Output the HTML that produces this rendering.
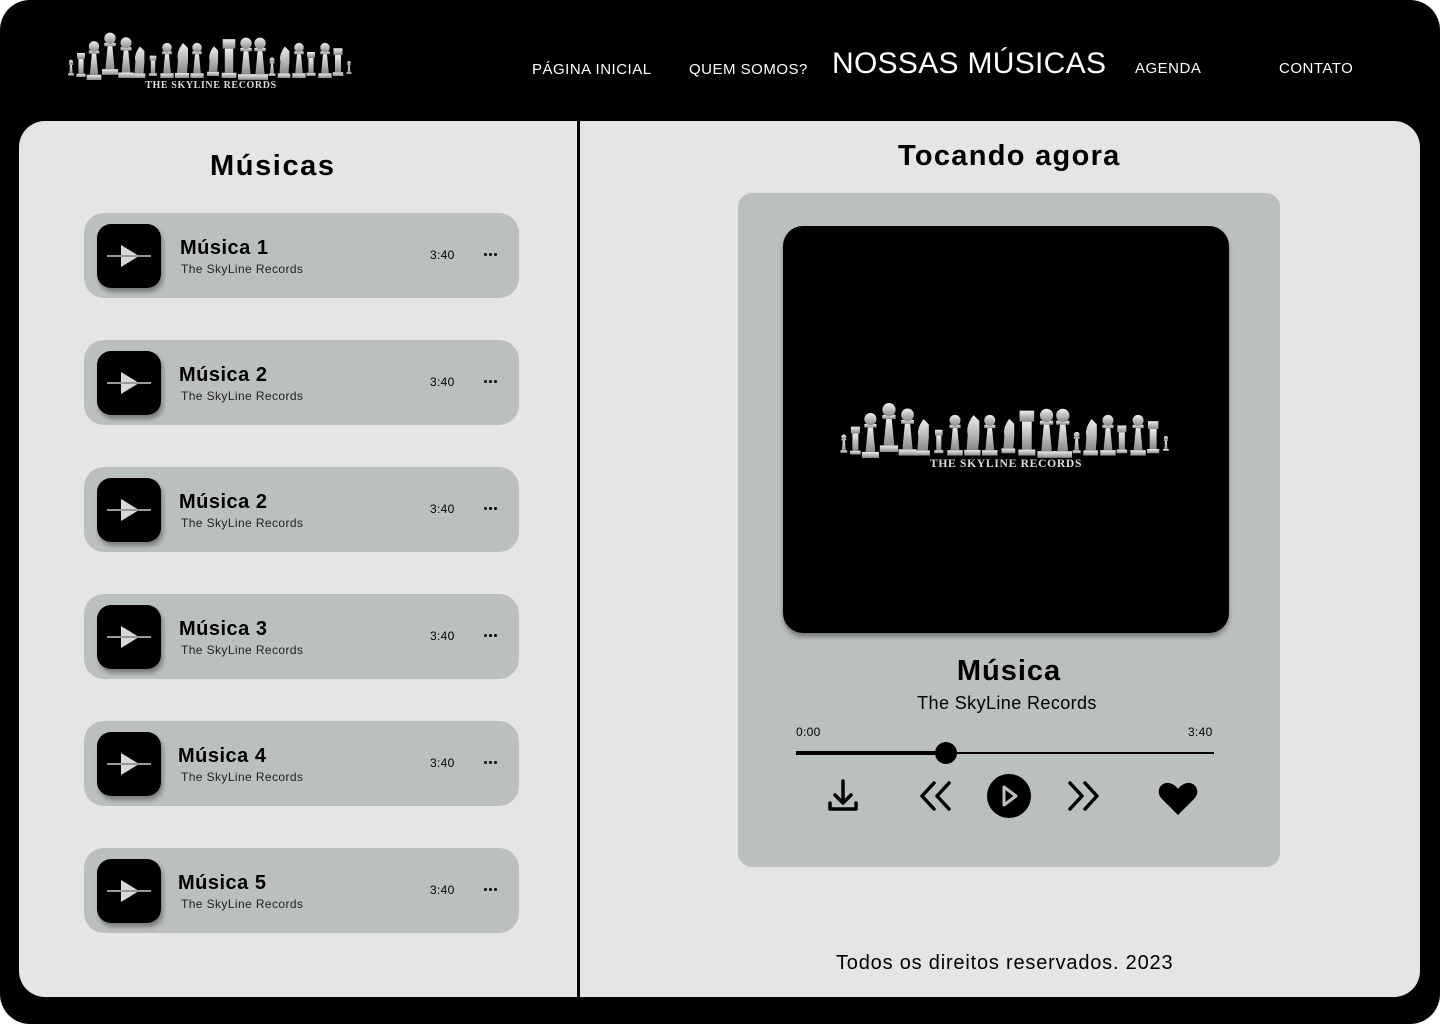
<!DOCTYPE html>
<html><head><meta charset="utf-8"><style>
*{margin:0;padding:0;box-sizing:border-box}
body{width:1440px;height:1024px;background:#fff;font-family:"Liberation Sans",sans-serif;overflow:hidden}
.frame{position:absolute;left:0;top:0;width:1440px;height:1024px;background:#000;border-radius:30px}
.nav{position:absolute;color:#fff;font-size:15px;top:61px;letter-spacing:.5px}
.panel{position:absolute;left:19px;top:121px;width:1401px;height:876px;background:#e5e5e5;border-radius:26px}
.divider{position:absolute;left:577px;top:121px;width:3px;height:876px;background:#000}
.item{position:absolute;left:84px;width:435px;height:85px;background:#bcbfc0;border-radius:20px}
.ic{position:absolute;left:13px;top:11px;width:64px;height:64px;background:#000;border-radius:14px;box-shadow:2px 4px 5px rgba(0,0,0,.35)}
.tt{position:absolute;left:96px;top:24px;font-size:20px;font-weight:bold;letter-spacing:.5px}
.st{position:absolute;left:97px;top:49px;font-size:12px;color:#222;letter-spacing:.4px}
.tm{position:absolute;left:346px;top:35px;font-size:12px;letter-spacing:.3px}
.dots{position:absolute;left:400px;top:40px;display:flex;gap:2px}
.dots i{width:3px;height:3px;background:#000;border-radius:50%}
</style></head><body>
<svg width="0" height="0" style="position:absolute">
<defs>
<linearGradient id="g" x1="0" y1="0" x2="0" y2="1"><stop offset="0" stop-color="#eee"/><stop offset="1" stop-color="#8a8a8a"/></linearGradient>
<symbol id="pc" viewBox="0 0 14 40"><rect x="0" y="35" width="14" height="5" fill="url(#g)"/><polygon points="3,35 5,14 9,14 11,35" fill="url(#g)"/><rect x="2" y="12" width="10" height="3" fill="url(#g)"/><circle cx="7" cy="8" r="5" fill="url(#g)"/></symbol>
<symbol id="kn" viewBox="0 0 14 40"><rect x="0" y="35" width="14" height="5" fill="url(#g)"/><path d="M2 35 L3 22 Q1 14 8 5 L13 10 L13 22 L12 35Z" fill="url(#g)"/></symbol>
<symbol id="rk" viewBox="0 0 14 40"><rect x="0" y="35" width="14" height="5" fill="url(#g)"/><rect x="3" y="12" width="8" height="23" fill="url(#g)"/><rect x="1" y="3" width="12" height="9" fill="url(#g)"/></symbol>
<symbol id="logo" viewBox="0 0 290 70">
<use href="#pc" x="2" y="38" width="6" height="18"/><use href="#rk" x="10" y="31" width="10" height="26"/>
<use href="#pc" x="20" y="18" width="16" height="42"/><use href="#pc" x="36" y="2" width="16" height="60"/>
<use href="#pc" x="52" y="14" width="16" height="44"/><use href="#kn" x="66" y="22" width="14" height="36"/>
<use href="#rk" x="82" y="34" width="10" height="22"/><use href="#pc" x="94" y="20" width="14" height="38"/>
<use href="#kn" x="106" y="18" width="20" height="40"/><use href="#pc" x="124" y="20" width="14" height="38"/>
<use href="#kn" x="140" y="22" width="14" height="34"/><use href="#rk" x="154" y="16" width="18" height="42"/>
<use href="#pc" x="172" y="14" width="16" height="46"/><use href="#pc" x="186" y="14" width="16" height="46"/>
<use href="#pc" x="202" y="36" width="8" height="20"/><use href="#kn" x="210" y="22" width="16" height="36"/>
<use href="#pc" x="226" y="20" width="14" height="38"/><use href="#rk" x="240" y="30" width="10" height="26"/>
<use href="#pc" x="252" y="20" width="14" height="38"/><use href="#rk" x="266" y="26" width="12" height="30"/>
<use href="#pc" x="280" y="40" width="6" height="14"/>
<text x="145" y="68" text-anchor="middle" font-family="Liberation Serif,serif" font-size="10" font-weight="bold" letter-spacing=".6" fill="#ddd">THE SKYLINE RECORDS</text>
</symbol>
</defs></svg>
<div class="frame"></div>
<svg style="position:absolute;left:66px;top:20px" width="290" height="70"><use href="#logo" width="290" height="70"/></svg>
<div class="nav" style="left:532px">PÁGINA INICIAL</div>
<div class="nav" style="left:689px">QUEM SOMOS?</div>
<div class="nav" style="left:832px;top:47px;font-size:30px;letter-spacing:.3px">NOSSAS MÚSICAS</div>
<div class="nav" style="left:1135px;top:60px">AGENDA</div>
<div class="nav" style="left:1279px;top:60px">CONTATO</div>
<div class="panel"></div>
<div class="divider"></div>
<div style="position:absolute;left:210px;top:150px;font-size:29px;font-weight:bold;letter-spacing:1.6px">Músicas</div>
<div style="position:absolute;left:898px;top:140px;font-size:29px;font-weight:bold;letter-spacing:1.3px">Tocando agora</div>

<div class="item" style="top:213px"><div class="ic"><svg width="64" height="64"><polygon points="24,21 24,43 42,32" fill="#d8d8d8"/><rect x="10" y="31" width="44" height="2" fill="#999"/></svg></div><div class="tt">Música 1</div><div class="st">The SkyLine Records</div><div class="tm">3:40</div><div class="dots"><i></i><i></i><i></i></div></div>
<div class="item" style="top:340px"><div class="ic"><svg width="64" height="64"><polygon points="24,21 24,43 42,32" fill="#d8d8d8"/><rect x="10" y="31" width="44" height="2" fill="#999"/></svg></div><div class="tt" style="left:95px">Música 2</div><div class="st">The SkyLine Records</div><div class="tm">3:40</div><div class="dots"><i></i><i></i><i></i></div></div>
<div class="item" style="top:467px"><div class="ic"><svg width="64" height="64"><polygon points="24,21 24,43 42,32" fill="#d8d8d8"/><rect x="10" y="31" width="44" height="2" fill="#999"/></svg></div><div class="tt" style="left:95px">Música 2</div><div class="st">The SkyLine Records</div><div class="tm">3:40</div><div class="dots"><i></i><i></i><i></i></div></div>
<div class="item" style="top:594px"><div class="ic"><svg width="64" height="64"><polygon points="24,21 24,43 42,32" fill="#d8d8d8"/><rect x="10" y="31" width="44" height="2" fill="#999"/></svg></div><div class="tt" style="left:95px">Música 3</div><div class="st">The SkyLine Records</div><div class="tm">3:40</div><div class="dots"><i></i><i></i><i></i></div></div>
<div class="item" style="top:721px"><div class="ic"><svg width="64" height="64"><polygon points="24,21 24,43 42,32" fill="#d8d8d8"/><rect x="10" y="31" width="44" height="2" fill="#999"/></svg></div><div class="tt" style="left:94px">Música 4</div><div class="st">The SkyLine Records</div><div class="tm">3:40</div><div class="dots"><i></i><i></i><i></i></div></div>
<div class="item" style="top:848px"><div class="ic"><svg width="64" height="64"><polygon points="24,21 24,43 42,32" fill="#d8d8d8"/><rect x="10" y="31" width="44" height="2" fill="#999"/></svg></div><div class="tt" style="left:94px">Música 5</div><div class="st">The SkyLine Records</div><div class="tm">3:40</div><div class="dots"><i></i><i></i><i></i></div></div>

<div style="position:absolute;left:738px;top:193px;width:542px;height:674px;background:#bcbfc0;border-radius:14px"></div>
<div style="position:absolute;left:783px;top:226px;width:446px;height:407px;background:#000;border-radius:20px;box-shadow:0 4px 5px rgba(0,0,0,.35)"></div>
<svg style="position:absolute;left:838px;top:385px" width="336" height="88"><use href="#logo" width="336" height="88"/></svg>
<div style="position:absolute;left:738px;width:542px;top:655px;text-align:center;font-size:29px;font-weight:bold;letter-spacing:1px">Música</div>
<div style="position:absolute;left:738px;width:538px;top:693px;text-align:center;font-size:18px;letter-spacing:.4px">The SkyLine Records</div>
<div style="position:absolute;left:796px;top:725px;font-size:12px;letter-spacing:.3px">0:00</div>
<div style="position:absolute;left:1188px;top:725px;font-size:12px;letter-spacing:.3px">3:40</div>
<div style="position:absolute;left:796px;top:752px;width:418px;height:2px;background:#000"></div>
<div style="position:absolute;left:796px;top:751px;width:150px;height:4px;background:#000"></div>
<div style="position:absolute;left:935px;top:742px;width:22px;height:22px;background:#000;border-radius:50%"></div>
<svg style="position:absolute;left:820px;top:770px" width="380" height="56" viewBox="820 770 380 56">
<g fill="none" stroke="#000" stroke-width="3.5" stroke-linecap="round" stroke-linejoin="round">
<path d="M843 781 V802 M835 795 L843 803 L851 795 M830 803 V809 H856 V803"/>
<path d="M934 783 L922 796 L934 809 M949 783 L937 796 L949 809"/>
<path d="M1070 783 L1082 796 L1070 809 M1085 783 L1097 796 L1085 809"/>
</g>
<circle cx="1009" cy="796" r="22" fill="#000"/>
<path d="M1004 787 L1004 805 L1016 796Z" fill="none" stroke="#bcbfc0" stroke-width="3" stroke-linejoin="round"/>
<path d="M1178 815 L1162 799 C1155 792 1160 782 1169 783 C1173 784 1176 786 1178 789 C1180 786 1183 784 1187 783 C1196 782 1201 792 1194 799Z" fill="#000"/>
</svg>
<div style="position:absolute;left:836px;top:952px;font-size:20px;letter-spacing:.8px">Todos os direitos reservados. 2023</div>
</body></html>
